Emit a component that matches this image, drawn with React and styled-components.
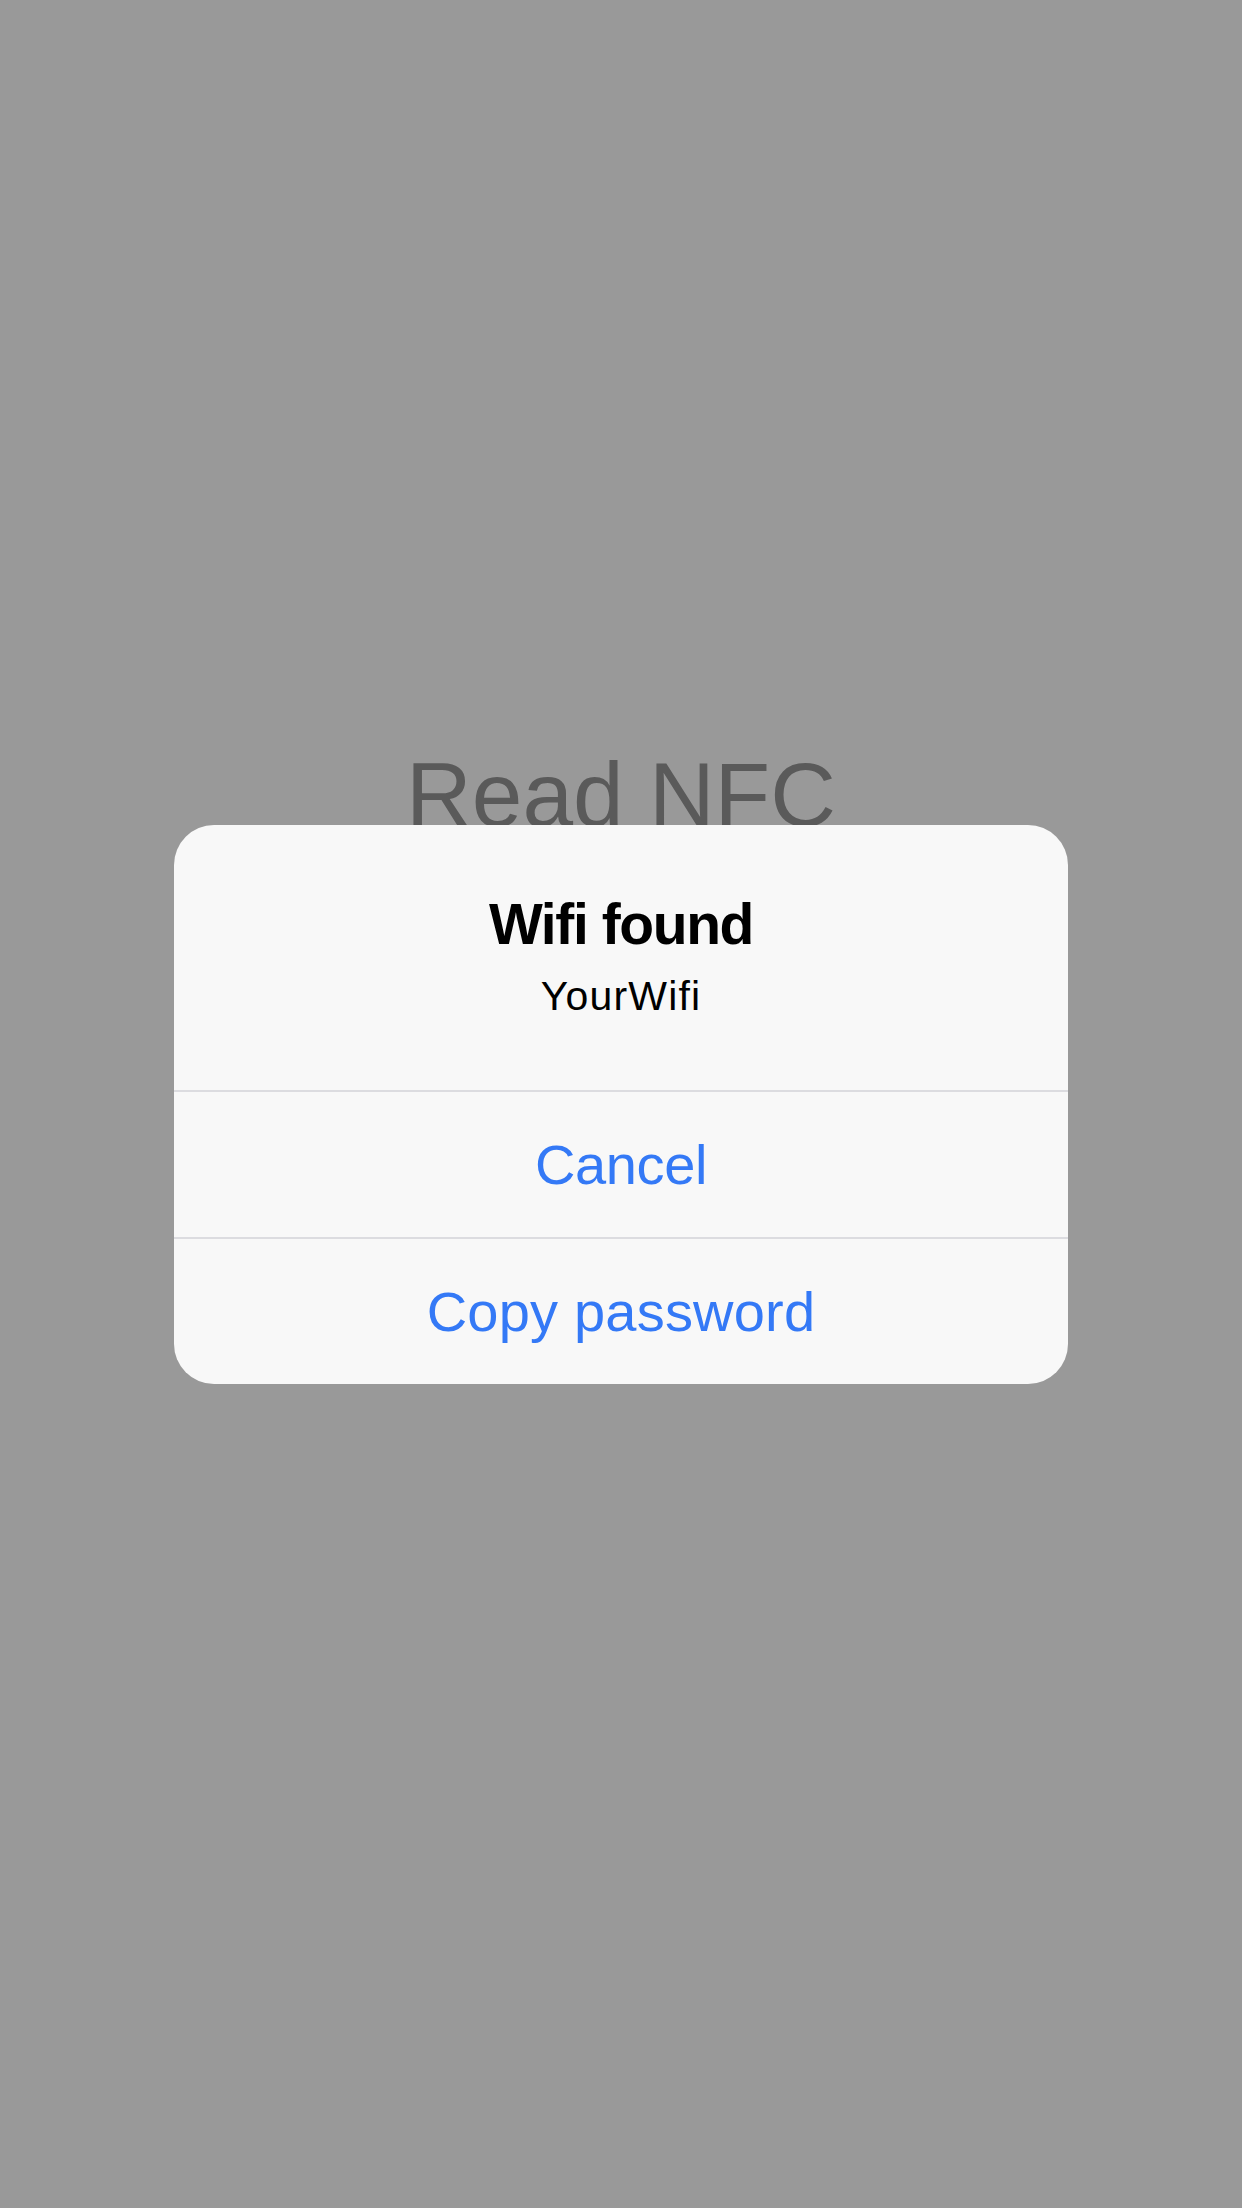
import React from "react";
import styled, { createGlobalStyle } from "styled-components";

const Global = createGlobalStyle`
  html, body { margin: 0; padding: 0; }
  body {
    background: #999999;
    font-family: "Liberation Sans", Arial, sans-serif;
    -webkit-font-smoothing: antialiased;
  }
`;

const Screen = styled.div`
  position: relative;
  width: 1242px;
  height: 2208px;
  background: #999999;
  overflow: hidden;
`;

const Content = styled.main`
  display: flex;
  flex-direction: column;
  align-items: center;
  padding-top: 750px;
`;

const Heading = styled.h1`
  margin: 0;
  font-family: "Liberation Sans", Arial, sans-serif;
  font-weight: 400;
  font-size: 91px;
  line-height: 90px;
  color: #5a5a5a;
  letter-spacing: 0;
`;

const Overlay = styled.div`
  position: absolute;
  inset: 0;
  display: flex;
  align-items: center;
  justify-content: center;
`;

const Alert = styled.div`
  width: 894px;
  background: #f8f8f8;
  border-radius: 40px;
  overflow: hidden;
  display: flex;
  flex-direction: column;
`;

const Header = styled.div`
  display: flex;
  flex-direction: column;
  align-items: center;
  padding: 64px 40px 69px;
  gap: 12px;
`;

const Title = styled.div`
  font-family: "Liberation Sans", Arial, sans-serif;
  font-weight: 700;
  font-size: 57px;
  line-height: 70px;
  letter-spacing: -1.4px;
  color: #000;
`;

const Message = styled.div`
  font-family: "Liberation Sans", Arial, sans-serif;
  font-size: 41px;
  line-height: 50px;
  letter-spacing: 1.2px;
  color: #000;
`;

const Action = styled.button`
  all: unset;
  box-sizing: border-box;
  height: 147px;
  border-top: 2px solid #dcdce0;
  display: flex;
  align-items: center;
  justify-content: center;
  font-family: "Liberation Sans", Arial, sans-serif;
  font-size: 56px;
  letter-spacing: ${(p) => p.$spacing || "0"};
  color: #3479f6;
  cursor: pointer;
`;

export default function App() {
  return (
    <Screen>
      <Global />
      <Content>
        <Heading>Read NFC</Heading>
      </Content>
      <Overlay>
        <Alert>
          <Header>
            <Title>Wifi found</Title>
            <Message>YourWifi</Message>
          </Header>
          <Action $spacing="-0.4px">Cancel</Action>
          <Action $spacing="0.2px">Copy password</Action>
        </Alert>
      </Overlay>
    </Screen>
  );
}
